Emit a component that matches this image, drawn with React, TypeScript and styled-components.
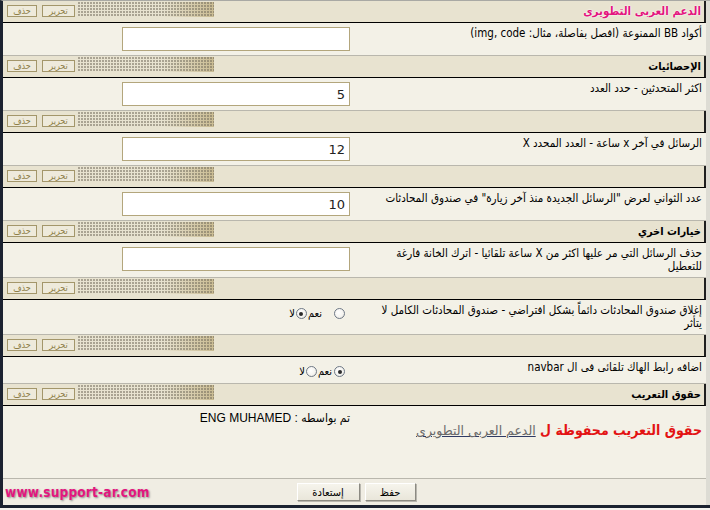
import React from "react";
import styled, { createGlobalStyle } from "styled-components";

const Global = createGlobalStyle`
  html, body { margin: 0; padding: 0; background: #f4f3ee; }
  body { font-family: "DejaVu Sans Condensed", "DejaVu Sans", sans-serif; }
`;

const Frame = styled.div`
  width: 710px;
  box-sizing: border-box;
  border-top: 1px solid #a9a9a4;
  border-left: 3px solid #1b2230;
  border-bottom: 3px solid #1b2230;
  background: #dddcd4;
  display: flex;
  flex-direction: column;
`;

const Header = styled.div`
  display: flex;
  align-items: flex-start;
  height: 22px;
  box-sizing: border-box;
  margin-right: 4px;
  padding-left: 4px;
  background: #e8e3d0;
  border-bottom: 1px solid #000;
  border-right: 2px solid #1f1f1f;
`;

const Tools = styled.div`
  display: flex;
  gap: 5px;
  margin-top: 4px;
`;

const ToolBtn = styled.span<{ $w: number }>`
  width: ${(p) => p.$w}px;
  height: 12px;
  box-sizing: border-box;
  border: 1px solid #a3966a;
  background: #eeeadb;
  color: #8d7e48;
  font-size: 9px;
  line-height: 10px;
  text-align: center;
  direction: rtl;
`;

const Dots = styled.div`
  width: 136px;
  height: 15px;
  margin-left: 3px;
  margin-top: 1px;
  background:
    radial-gradient(circle at 1px 1px, rgba(110, 104, 88, 0.6) 0.65px, transparent 1.05px) 0 0 / 3px 3px,
    linear-gradient(90deg, rgba(200, 188, 150, 0) 0%, rgba(200, 188, 150, 0) 62%, #c9bb92 100%);
`;

const Title = styled.div<{ $pink?: boolean }>`
  flex: 1;
  direction: rtl;
  text-align: right;
  padding-right: 3px;
  font-weight: bold;
  font-size: ${(p) => (p.$pink ? 11.5 : 11)}px;
  line-height: 21px;
  color: ${(p) => (p.$pink ? "#e3157e" : "#000")};
  text-shadow: ${(p) => (p.$pink ? "0 0 2px #fff, 0 0 1px #fff" : "none")};
`;

const Row = styled.div<{ $h: number }>`
  display: grid;
  grid-template-columns: 1fr 352px;
  direction: rtl;
  height: ${(p) => p.$h}px;
  box-sizing: border-box;
  margin-right: 4px;
  background: #f3f1e7;
  border-bottom: 1px solid #b9b7ad;
`;

const Label = styled.div`
  padding: 4px 4px 0 20px;
  text-align: right;
  font-size: 11.5px;
  line-height: 13px;
  color: #000;
`;

const Field = styled.div<{ $top?: number }>`
  display: flex;
  align-items: flex-start;
  padding: ${(p) => p.$top ?? 4}px 5px 0 0;
`;

const TextBox = styled.input`
  width: 228px;
  height: 24px;
  box-sizing: border-box;
  border: 1px solid #b3a67c;
  background: #fff;
  direction: ltr;
  text-align: right;
  padding: 0 4px;
  font-family: "DejaVu Sans", sans-serif;
  font-size: 13px;
  color: #222;
  outline: none;
`;

const Choices = styled.div`
  display: flex;
  align-items: center;
  padding-right: 5px;
  font-size: 11px;
`;

const Choice = styled.label<{ $gap: number }>`
  display: inline-flex;
  align-items: center;
  gap: ${(p) => p.$gap}px;
  margin-left: 1px;
`;

const Radio = styled.input`
  appearance: none;
  -webkit-appearance: none;
  margin: 0;
  width: 11px;
  height: 11px;
  border-radius: 50%;
  border: 1px solid #6e7886;
  background: radial-gradient(circle at 40% 40%, #fff 0%, #f4f3ef 60%, #d8d6cc 100%);
  position: relative;
  &:checked::after {
    content: "";
    position: absolute;
    left: 2.5px;
    top: 2.5px;
    width: 4px;
    height: 4px;
    border-radius: 50%;
    background: #2b2b2b;
  }
`;

const CreditRow = styled.div`
  display: grid;
  grid-template-columns: 1fr 352px;
  direction: rtl;
  height: 73px;
  box-sizing: border-box;
  margin-right: 4px;
  background: #f3f1e7;
  border-bottom: 1px solid #b9b7ad;
`;

const Rights = styled.div`
  padding: 17px 4px 0 0;
  font-size: 14px;
  line-height: 15px;
  font-weight: bold;
  color: #e31313;
`;

const RightsLink = styled.a`
  font-family: "DejaVu Sans", sans-serif;
  font-weight: normal;
  font-size: 12.5px;
  color: #6a6a6a;
  text-decoration: underline;
  text-decoration-color: #2e3a64;
`;

const By = styled.div`
  padding: 5px 5px 0 0;
  font-family: "Liberation Sans", "DejaVu Sans Condensed", sans-serif;
  font-size: 12px;
  line-height: 14px;
  color: #000;
`;

const Bar = styled.div`
  display: grid;
  grid-template-columns: 1fr auto 1fr;
  align-items: center;
  height: 26px;
  margin-right: 4px;
  background: #f0ede3;
`;

const Watermark = styled.div`
  padding-left: 2px;
  font-size: 13.5px;
  font-weight: bold;
  color: #e2167f;
  text-shadow: 1px 1px 2px #8a8a8a;
  letter-spacing: 0.2px;
`;

const Buttons = styled.div`
  display: flex;
  direction: rtl;
  gap: 5px;
  margin-left: 3px;
`;

const Btn = styled.button<{ $w: number }>`
  width: ${(p) => p.$w}px;
  height: 18px;
  padding: 0;
  font-family: "DejaVu Sans Condensed", "DejaVu Sans", sans-serif;
  font-size: 11px;
  color: #000;
  background: linear-gradient(#f6f4ec, #e9e6da);
  border: 1px solid;
  border-color: #fff #8c8a82 #8c8a82 #fff;
  box-shadow: 1px 1px 0 #b8b6ae;
`;

type Item =
  | { kind: "header"; title?: string; pink?: boolean }
  | { kind: "text"; label: string; value: string; h: number }
  | { kind: "radio"; label: string; yes: boolean; h: number; gap: number; top: number };

const items: Item[] = [
  { kind: "header", title: "الدعم العربى التطويرى", pink: true },
  { kind: "text", label: "أكواد BB الممنوعة (افصل بفاصلة، مثال: img, code)", value: "", h: 33 },
  { kind: "header", title: "الإحصائيات" },
  { kind: "text", label: "اكثر المتحدثين - حدد العدد", value: "5", h: 33 },
  { kind: "header" },
  { kind: "text", label: "الرسائل في آخر x ساعة - العدد المحدد X", value: "12", h: 33 },
  { kind: "header" },
  { kind: "text", label: "عدد الثواني لعرض \"الرسائل الجديدة منذ آخر زيارة\" في صندوق المحادثات", value: "10", h: 33 },
  { kind: "header", title: "خيارات اخري" },
  { kind: "text", label: "حذف الرسائل التي مر عليها اكثر من X ساعة تلقائيا - اترك الخانة فارغة للتعطيل", value: "", h: 35 },
  { kind: "header" },
  { kind: "radio", label: "إغلاق صندوق المحادثات دائماً بشكل افتراضي - صندوق المحادثات الكامل لا يتأثر", yes: false, h: 35, gap: 12, top: 7 },
  { kind: "header" },
  { kind: "radio", label: "اضافه رابط الهاك تلقائى فى ال navbar", yes: true, h: 27, gap: 2, top: 8 },
  { kind: "header", title: "حقوق التعريب" },
];

function HeaderRow({ title, pink }: { title?: string; pink?: boolean }) {
  return (
    <Header>
      <Tools>
        <ToolBtn $w={30}>حذف</ToolBtn>
        <ToolBtn $w={33}>تحرير</ToolBtn>
      </Tools>
      <Dots />
      <Title $pink={pink}>{title}</Title>
    </Header>
  );
}

export default function App() {
  return (
    <>
      <Global />
      <Frame>
        {items.map((it, i) => {
          if (it.kind === "header") return <HeaderRow key={i} title={it.title} pink={it.pink} />;
          if (it.kind === "text")
            return (
              <Row key={i} $h={it.h}>
                <Label>{it.label}</Label>
                <Field>
                  <TextBox defaultValue={it.value} />
                </Field>
              </Row>
            );
          return (
            <Row key={i} $h={it.h}>
              <Label>{it.label}</Label>
              <Field $top={it.top}>
                <Choices>
                  <Choice $gap={it.gap}>
                    <Radio type="radio" name={`r${i}`} defaultChecked={it.yes} />
                    نعم
                  </Choice>
                  <Choice $gap={1}>
                    <Radio type="radio" name={`r${i}`} defaultChecked={!it.yes} />
                    لا
                  </Choice>
                </Choices>
              </Field>
            </Row>
          );
        })}
        <CreditRow>
          <Rights>
            حقوق التعريب محفوظة ل <RightsLink href="#">الدعم العربى التطويرى</RightsLink>
          </Rights>
          <By>تم بواسطه : ENG MUHAMED</By>
        </CreditRow>
        <Bar>
          <Watermark>www.support-ar.com</Watermark>
          <Buttons>
            <Btn $w={51}>حفظ</Btn>
            <Btn $w={63}>إستعادة</Btn>
          </Buttons>
          <div />
        </Bar>
      </Frame>
    </>
  );
}
